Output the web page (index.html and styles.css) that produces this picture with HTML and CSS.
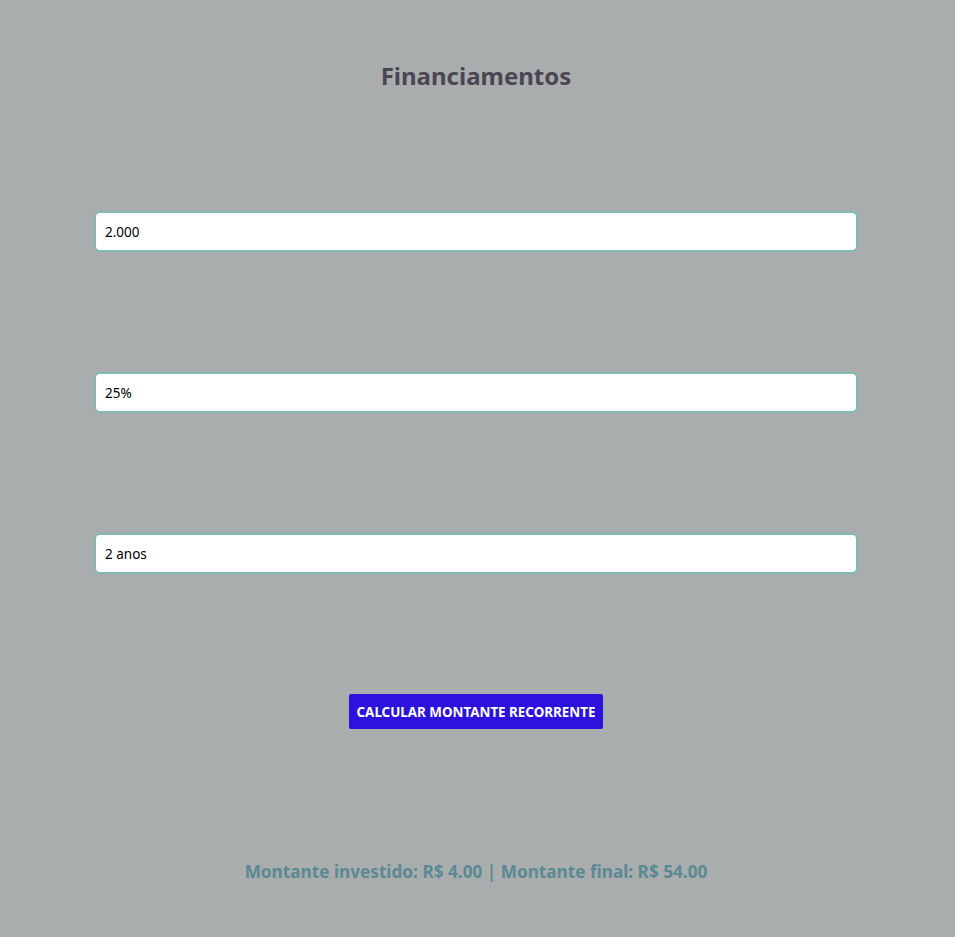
FILE: index.html
```html
<!DOCTYPE html>
<html lang="pt-BR">
<head>
<meta charset="utf-8">
<title>Financiamentos</title>
<link rel="stylesheet" href="styles.css">
</head>
<body>
<main class="page">
  <h1 class="title">Financiamentos</h1>
  <form class="form">
    <input class="field" type="text" value="2.000">
    <input class="field" type="text" value="25%">
    <input class="field" type="text" value="2 anos">
    <button class="btn" type="button">CALCULAR MONTANTE RECORRENTE</button>
  </form>
  <p class="result">Montante investido: R$ 4.00 | Montante final: R$ 54.00</p>
</main>
</body>
</html>
```
FILE: styles.css
```css
html, body {
  margin: 0;
  padding: 0;
  background: #a9adad;
}
body {
  font-family: "Segoe UI", "Noto Sans", "Open Sans", sans-serif;
  min-height: 937px;
}
.page {
  display: flex;
  flex-direction: column;
  align-items: center;
  padding-top: 58px;
  padding-right: 3px;
}
.title {
  margin: 0;
  font-size: 24px;
  line-height: 36px;
  font-weight: 700;
  color: #4a4652;
}
.form {
  width: 764px;
  display: flex;
  flex-direction: column;
  align-items: center;
  gap: 120px;
  margin-top: 117px;
}
.field {
  box-sizing: border-box;
  width: 100%;
  height: 41px;
  border: 2px solid #7ebcb3;
  border-radius: 6px;
  background: #fff;
  padding: 0 9px;
  font-family: inherit;
  font-size: 13.5px;
  color: #000;
  outline: none;
}
.btn {
  height: 35px;
  padding: 0 8px;
  background: #2c12dc;
  color: #fff;
  border: none;
  border-radius: 2px;
  font-family: inherit;
  font-weight: 700;
  font-size: 13.4px;
}
.result {
  margin: 130px 0 0;
  font-size: 17.2px;
  line-height: 26px;
  font-weight: 700;
  color: #5b8a93;
}
```
